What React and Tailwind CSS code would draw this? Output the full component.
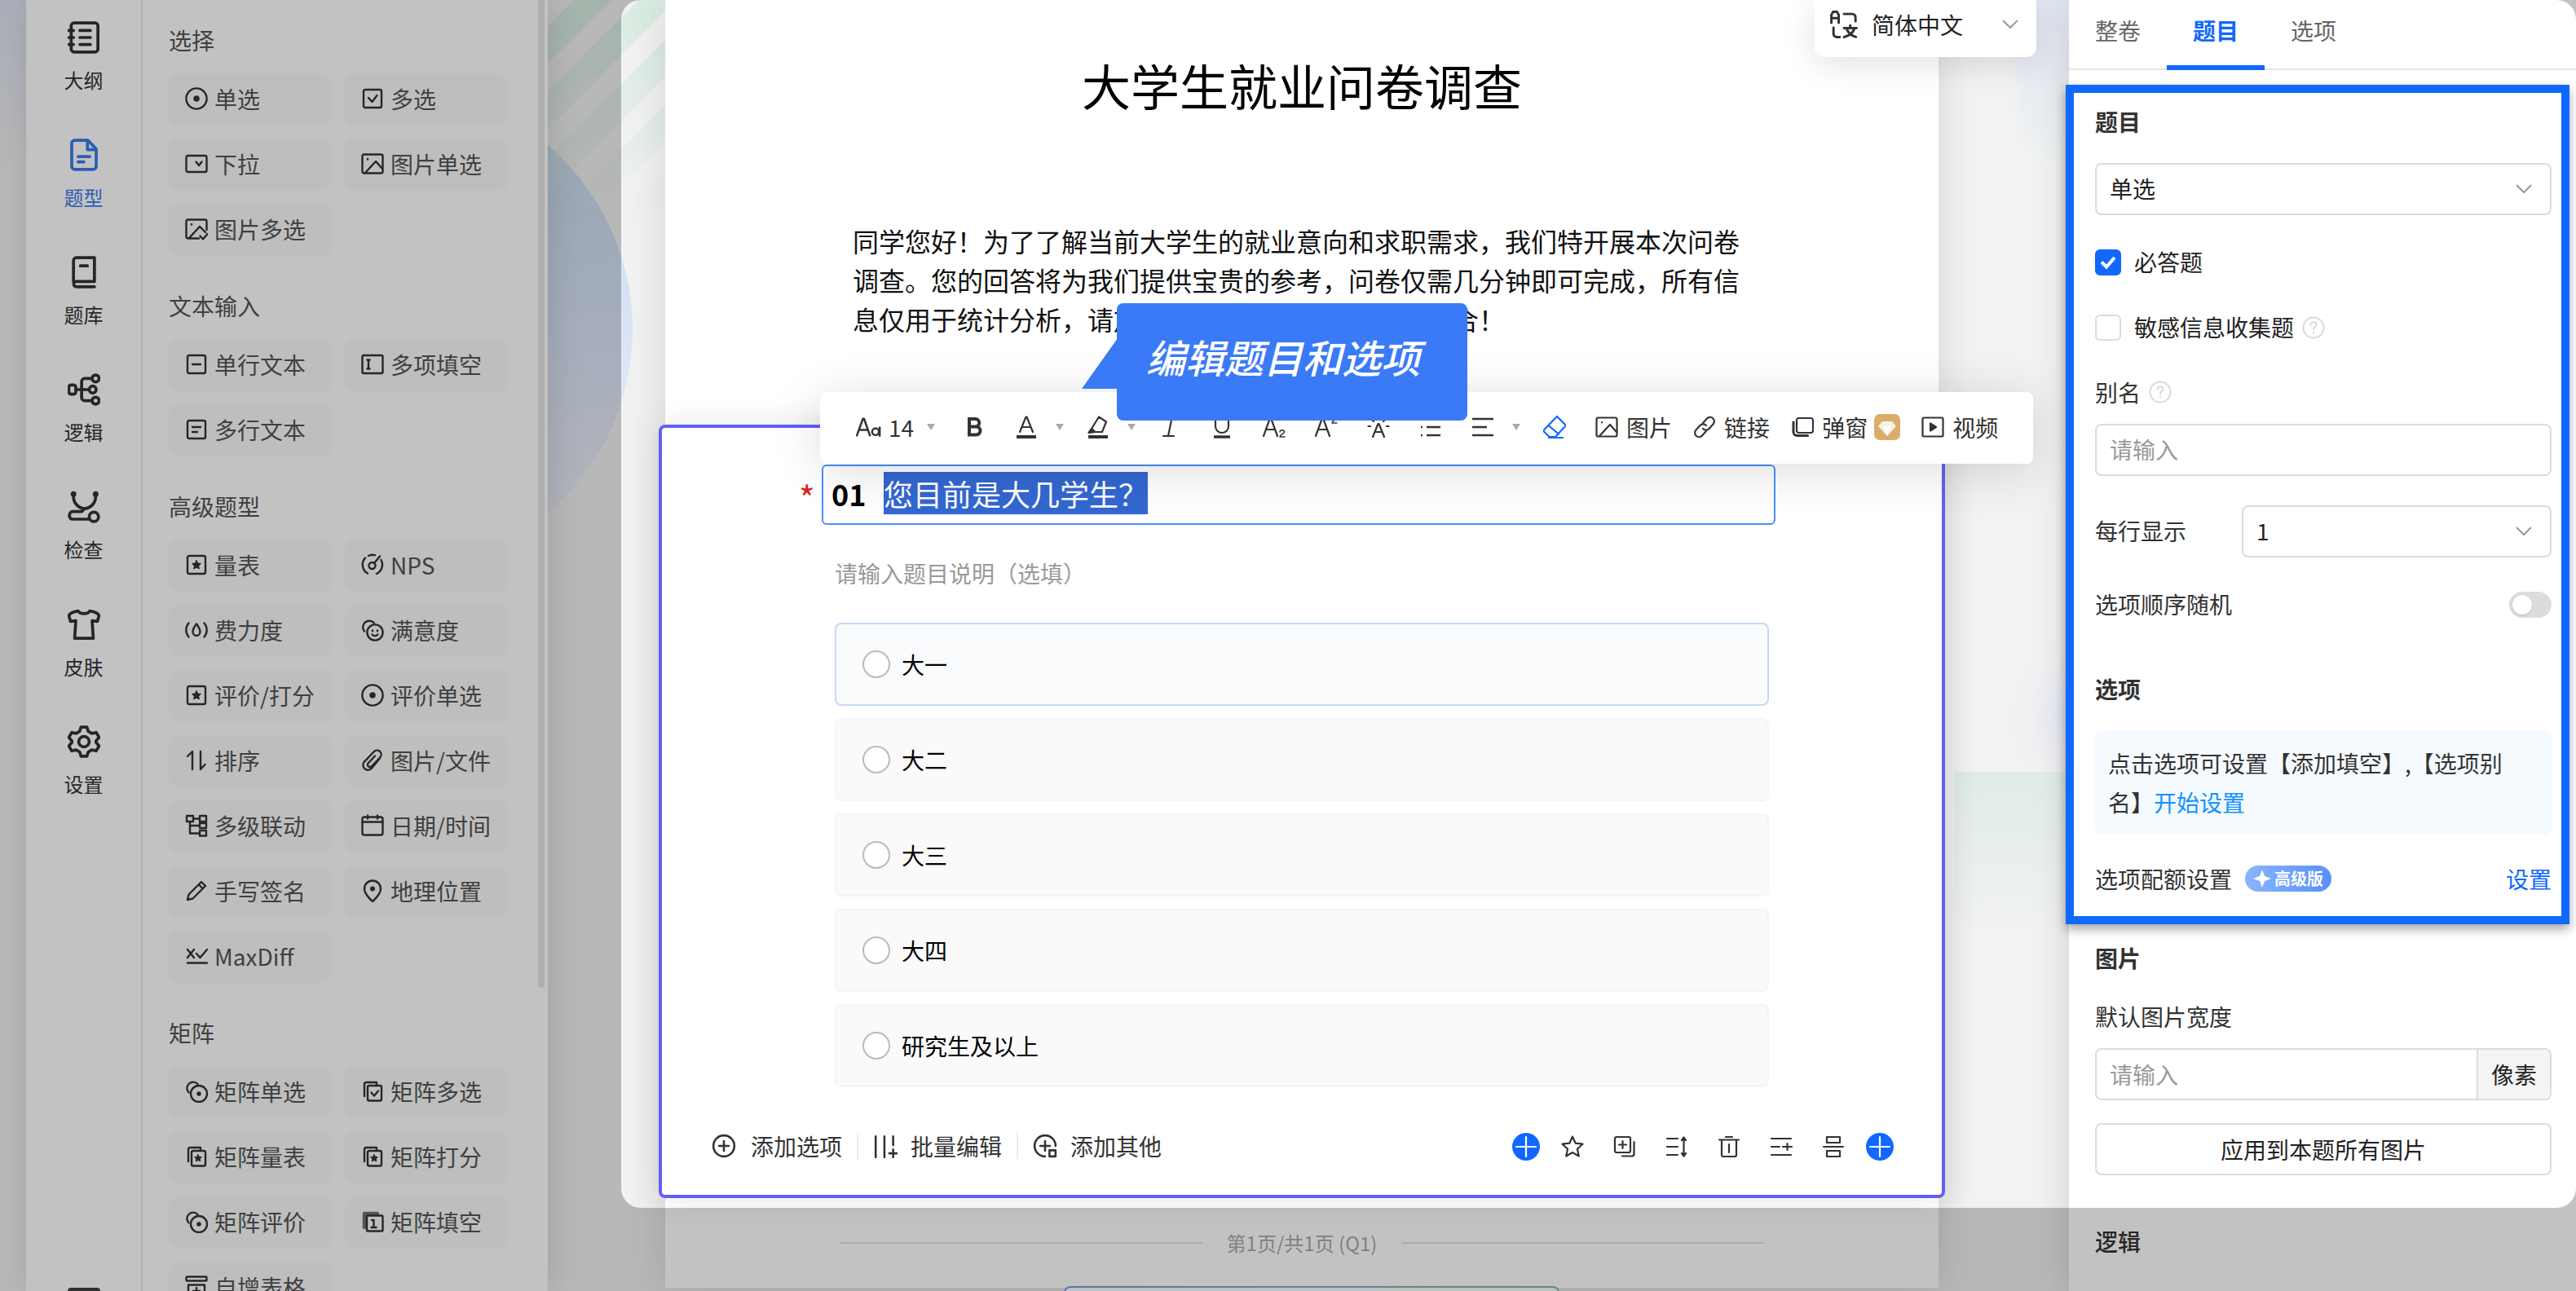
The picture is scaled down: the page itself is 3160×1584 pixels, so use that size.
// src/App.jsx
import React, { useEffect, useRef, useState } from 'react';

const Svg = ({ size = 28, children, className = '', sw = 2.4 }) => (
  <svg
    width={size}
    height={size}
    viewBox="0 0 28 28"
    fill="none"
    stroke="currentColor"
    strokeWidth={sw}
    strokeLinecap="round"
    strokeLinejoin="round"
    className={`shrink-0 ${className}`}
    aria-hidden="true"
  >
    {children}
  </svg>
);

const STAR = 'M14 8.5l1.7 3.5 3.8.5-2.8 2.7.7 3.8-3.4-1.8-3.4 1.8.7-3.8-2.8-2.7 3.8-.5z';
const SMALL_STAR = 'M16 11.5l1.4 2.8 3 .4-2.2 2.1.5 3.1-2.7-1.5-2.7 1.5.5-3.1-2.2-2.1 3-.4z';
const BACK_CARD = 'M4 20V5.5A2.5 2.5 0 0 1 6.500 3H19v3';

// question type glyphs, all on a 28px grid
const glyphs = {
  radio: <><circle cx="14" cy="14" r="12.6" /><circle cx="14" cy="14" r="2.600" fill="currentColor" /></>,
  check: <><rect x="3" y="3" width="22" height="22" rx="2" /><path d="M9 13l4.500 5 6-8" /></>,
  dropdown: <><rect x="1.5" y="4" width="25" height="20" rx="2" /><path d="M13.500 11.500l3.500 4.500 3.500-4.500" /></>,
  image: <><rect x="1.5" y="2.500" width="25" height="23" rx="2" /><path d="M8 8v.5M5 25L18 11l8 9" /></>,
  imageMulti: <><path d="M17 25.500H3.500a2 2 0 0 1-2-2v-19a2 2 0 0 1 2-2h21a2 2 0 0 1 2 2V15M8 8v.5M5 25L18 11l7 7M18.500 22.500l3.500 4 5.500-6.500" /></>,
  line: <><rect x="3" y="3" width="22" height="22" rx="2" /><path d="M9 14h10" /></>,
  fill: <><rect x="1.5" y="3" width="25" height="22" rx="1.500" /><path d="M7.500 8.500h3M9 8.500v11M7.500 19.500h3" /></>,
  lines: <><rect x="3" y="3" width="22" height="22" rx="2" /><path d="M9 11h10M9 17h6" /></>,
  star: <><rect x="3" y="3" width="22" height="22" rx="2" /><path d={STAR} fill="currentColor" strokeWidth="1" /></>,
  nps: <><path d="M8 24.500A12.300 12.300 0 0 1 5 5.500M9 3a12.300 12.300 0 0 1 8-.9M24.500 8a12.300 12.300 0 0 1-5.500 17" /><circle cx="13.500" cy="15" r="4" /><path d="M16 12l7-8.500" /></>,
  effort: <><path d="M4.500 5.500a13 13 0 0 0 0 17M23.500 5.500a13 13 0 0 1 0 17M14 6.500c-3 4-4.500 6.500-4.500 9.500a4.500 5 0 0 0 9 0c0-3-1.500-5.500-4.500-9.500z" /></>,
  smile: <><path d="M4 15.500A7.500 7.500 0 1 1 16 5.500" /><circle cx="17" cy="17" r="9.600" /><path d="M14 14.500v.8M20 14.500v.8M13.500 19.500a4.500 4.500 0 0 0 7 0" /></>,
  sort: <><path d="M3 9l6-6v22M19 3v22l5.500-6" /></>,
  clip: <><path d="M22.500 12L13 23.500a6 6 0 0 1-9.300-7.700L15.500 3.500a5 5 0 0 1 8 6.500L13 21a2.800 2.800 0 0 1-4.500-3.500L17 8.500" /></>,
  cascade: <><rect x="2" y="2" width="8" height="7" /><rect x="18" y="2" width="8" height="7" /><rect x="18" y="11" width="8" height="6" /><rect x="18" y="20" width="8" height="6.500" /><path d="M10 5.500h8M6 9v14.500h12M6 14h12" /></>,
  calendar: <><rect x="1.5" y="3.500" width="25" height="22" rx="2.500" /><path d="M2 9.500h24M8 1.500v4M20 1.500v4" /></>,
  pen: <><path d="M3 25l1.500-6.500L20 3l5 5L9.500 23.500zM17 6.500l4.500 4.500" /></>,
  pin: <><path d="M14 27s10-8.500 10-15.500a10 10 0 0 0-20 0C4 18.500 14 27 14 27z" /><circle cx="14" cy="11.500" r="3" fill="currentColor" stroke="none" /></>,
  maxdiff: <><path d="M3 6l8 10M11 6L3 16M14 11l4.500 5L27 6M3 22.500h24" /></>,
  rings: <><path d="M4.500 15.500A7.500 7.500 0 1 1 15.500 5" /><circle cx="17" cy="17" r="10" /><circle cx="17" cy="17" r="1.500" fill="currentColor" /></>,
  cardsCheck: <><path d={BACK_CARD} /><rect x="8" y="7" width="17" height="18.500" rx="2" /><path d="M12.500 15.500l3.500 4 5-6" /></>,
  cardsStar: <><path d={BACK_CARD} /><rect x="8" y="7" width="17" height="18.500" rx="2" /><path d={SMALL_STAR} fill="currentColor" strokeWidth="1" /></>,
  cardsFill: <><path d="M4 21V4h16" strokeWidth="4.500" className="opacity-70" /><rect x="7" y="6.500" width="19.500" height="19" rx="1" /><path d="M13 12h2.500v9M12.500 21h6" /></>,
  table: <><rect x="1.5" y="1.500" width="25" height="5" rx="1" /><path d="M4 27V11.500h20V27M10 19h8M14 15v8" /></>,
};

const sections = [
  {
    title: '选择',
    items: [['radio', '单选'], ['check', '多选'], ['dropdown', '下拉'], ['image', '图片单选'], ['imageMulti', '图片多选']],
  },
  {
    title: '文本输入',
    items: [['line', '单行文本'], ['fill', '多项填空'], ['lines', '多行文本']],
  },
  {
    title: '高级题型',
    items: [
      ['star', '量表'], ['nps', 'NPS'], ['effort', '费力度'], ['smile', '满意度'], ['star', '评价/打分'],
      ['radio', '评价单选'], ['sort', '排序'], ['clip', '图片/文件'], ['cascade', '多级联动'],
      ['calendar', '日期/时间'], ['pen', '手写签名'], ['pin', '地理位置'], ['maxdiff', 'MaxDiff'],
    ],
  },
  {
    title: '矩阵',
    items: [
      ['rings', '矩阵单选'], ['cardsCheck', '矩阵多选'], ['cardsStar', '矩阵量表'], ['cardsStar', '矩阵打分'],
      ['rings', '矩阵评价'], ['cardsFill', '矩阵填空'], ['table', '自增表格'],
    ],
  },
];

// side navigation, 40px icons
const navItems = [
  { label: '大纲', icon: <><rect x="3" y="1.500" width="23" height="25" rx="2.500" /><path d="M1 8h4M1 14h4M1 20h4M10.500 8h9M10.500 14h9M10.500 20h9" /></> },
  { label: '题型', active: true, icon: <><path d="M17.500 1.500H6A2.500 2.500 0 0 0 3.500 4v20A2.500 2.500 0 0 0 6 26.500h16a2.500 2.500 0 0 0 2.500-2.500V9zM17 2v7.500h7.500M9 15.500h10M9 20h5" /></> },
  { label: '题库', icon: <><path d="M5 22V4a2.500 2.500 0 0 1 2.500-2.500H23V22H7.500a2.200 2.200 0 0 0 0 4.500H23M11 8.500h6" /></> },
  { label: '逻辑', icon: <><rect x="1" y="10" width="6" height="8" rx="2" /><circle cx="24" cy="4.500" r="3" /><circle cx="21.500" cy="14" r="3" /><circle cx="24" cy="23.500" r="3" /><path d="M7 14h11.500M21 4.500h-6.500A2.500 2.500 0 0 0 12 7v14a2.500 2.500 0 0 0 2.500 2.500H21" /></> },
  { label: '检查', icon: <><path d="M5 2v3c0 6 4.500 10 9.500 10.500C19.500 15 24 11 24 5V2M14.500 15.500L12 18H4.500C2.500 18 1.500 19.500 1.500 21.500s1 3 3 3H19" /><circle cx="5" cy="3" r="1.200" fill="currentColor" /><circle cx="24" cy="3" r="1.200" fill="currentColor" /><circle cx="22.500" cy="22.500" r="4" /></> },
  { label: '皮肤', icon: <path d="M9 2.500c1.500 3 8.500 3 10 0 3.500.5 7 2 8 4l-1.500 5L21 11l1 15H6l1-15-4.500.5L1 6.500c1-2 4.500-3.500 8-4z" /> },
  { label: '设置', icon: <><path d="M11.500 1.500h5l1.200 3.700 3 1.700 3.800-.8 2.500 4.300-2.600 2.900v1.400l2.600 2.900-2.500 4.300-3.800-.8-3 1.700-1.200 3.700h-5l-1.200-3.700-3-1.700-3.800.8L1 17.600l2.600-2.900v-1.400L1 10.400l2.500-4.300 3.800.8 3-1.700z" /><circle cx="14" cy="14" r="4.500" /></> },
];

const options = ['大一', '大二', '大三', '大四', '研究生及以上'];

const SideNav = () => (
  <nav className="flex w-[143px] shrink-0 flex-col items-center gap-[60px] border-r-2 border-[#e8e8e8] bg-white pt-[26px]">
    {navItems.map((item) => (
      <button
        key={item.label}
        className={`flex h-[84px] shrink-0 flex-col items-center justify-between text-2xl/8 ${
          item.active ? 'text-[#3a7bee]' : 'text-[#333]'
        }`}
      >
        <Svg size={40} sw={2.6}>{item.icon}</Svg>
        <span className="-mb-1">{item.label}</span>
      </button>
    ))}
    <button className="mt-auto h-1 w-10 rounded-t bg-[#404040]" aria-label="更多" />
  </nav>
);

const TypePanel = () => (
  <aside className="relative w-[497px] shrink-0 overflow-hidden bg-white pl-8">
    {sections.map((section, index) => (
      <section key={section.title} className={index === 0 ? 'pt-7' : 'pt-10'}>
        <h2 className="mb-5 text-[28px]/[42px] text-[#555]">{section.title}</h2>
        <div className="grid w-[416px] grid-cols-2 gap-4">
          {section.items.map(([icon, label]) => (
            <button key={label} className="flex h-16 items-center gap-2 rounded-xl bg-[#fafafa] pb-0.5 pl-5 text-[28px]/[42px] text-[#555]">
              <Svg className="text-[#333]">{glyphs[icon]}</Svg>
              {label}
            </button>
          ))}
        </div>
      </section>
    ))}
    <div className="absolute top-0 right-1 h-[1212px] w-2 rounded-b bg-[#e6e6e6]" />
  </aside>
);

// decorative canvas behind the survey sheet
const Backdrop = () => (
  <div className="pointer-events-none absolute inset-0 overflow-hidden">
    <svg width="200" height="700" className="absolute top-0 left-0">
      <defs>
        <linearGradient id="stripeFade" gradientUnits="userSpaceOnUse" x1="0" y1="0" x2="0" y2="280">
          <stop offset="0" stopColor="#d9ece2" />
          <stop offset="1" stopColor="#d9ece2" stopOpacity="0" />
        </linearGradient>
        <linearGradient id="discFade" x1="0" y1="0" x2="0" y2="1">
          <stop offset="0.1" stopColor="#c8daf0" />
          <stop offset="0.500" stopColor="#dae4f7" />
          <stop offset="1" stopColor="#eef0f6" />
        </linearGradient>
      </defs>
      <circle cx="-193" cy="404" r="297" fill="url(#discFade)" />
      {[32, 112, 193, 273, 353].map((x) => (
        <polygon key={x} fill="url(#stripeFade)" points={`${x},0 ${x + 46},0 ${x - 354},400 ${x - 400},400`} />
      ))}
    </svg>
    <svg width="170" height="1300" className="absolute top-0 right-0">
      <defs>
        <linearGradient id="skyFade" x1="0" y1="0" x2="0" y2="1">
          <stop offset="0" stopColor="#dfe5f3" />
          <stop offset="1" stopColor="#eef1f2" />
        </linearGradient>
        <linearGradient id="mintFade" x1="0" y1="0" x2="0" y2="1">
          <stop offset="0" stopColor="#dfecea" />
          <stop offset="1" stopColor="#f2f2f2" />
        </linearGradient>
        <radialGradient id="glow">
          <stop offset="0" stopColor="#dfe3f6" />
          <stop offset="1" stopColor="#f2f2f2" stopOpacity="0" />
        </radialGradient>
        <filter id="soft"><feGaussianBlur stdDeviation="8" /></filter>
      </defs>
      <path d="M104 -20H190V190H122C108 160 104 90 104 -20z" fill="url(#skyFade)" filter="url(#soft)" />
      <circle cx="190" cy="880" r="110" fill="url(#glow)" />
      <rect x="30" y="947" width="140" height="200" fill="url(#mintFade)" />
    </svg>
  </div>
);

const Caret = () => (
  <svg width="10" height="8" viewBox="0 0 10 8" className="shrink-0 fill-[#aaa]" aria-hidden="true"><path d="M0 0h10L5 8z" /></svg>
);

const Tool = ({ label, children, className = '' }) => (
  <button aria-label={label} className={`flex h-8 w-8 shrink-0 items-center justify-center ${className}`}>
    <Svg sw={2.2}>{children}</Svg>
  </button>
);

const LabelTool = ({ icon, label, children }) => (
  <button className="flex shrink-0 items-center gap-2 text-[28px]/[42px]">
    <span className="flex h-8 w-8 items-center justify-center"><Svg sw={2.2}>{icon}</Svg></span>
    {label}
    {children}
  </button>
);

const FormatToolbar = () => (
  <div className="absolute -top-[44px] left-[194px] z-10 flex h-[88px] w-[1488px] items-center gap-8 rounded-lg bg-white pb-0.5 pl-11 whitespace-nowrap text-[#333] shadow-[0_8px_60px_rgba(0,0,0,0.14)]">
    <button className="flex shrink-0 items-center gap-2 text-[28px]/[42px]">
      <Svg size={32} sw={2.2}><path d="M1 23L7.500 5h1.200L15 23M3.500 17h9" /><circle cx="21" cy="19" r="3.600" /><path d="M25.500 14.500v9" /></Svg>
      14
      <span className="ml-2"><Caret /></span>
    </button>
    <Tool label="加粗"><path d="M8 4h7.500a4.700 4.700 0 0 1 0 9.500H8zM8 13.500h8.500a5 5 0 0 1 0 10H8z" strokeWidth="4" strokeLinejoin="miter" /></Tool>
    <div className="flex items-center gap-5">
      <Tool label="文字颜色"><path d="M6 20L13.500 1.500h1L22 20M8.500 14h11" /><path d="M2 26h24" strokeWidth="4" strokeLinecap="butt" /></Tool>
      <Caret />
    </div>
    <div className="-ml-1.5 flex items-center gap-5">
      <Tool label="背景颜色"><path d="M15 1.500l9 6-5 12.500h-8.500L6 16zM10.500 20L6 16l-3.500 5z" /><path d="M6.500 16.500L3.500 20.500 9.500 20z" fill="currentColor" /><path d="M2 26h24" strokeWidth="4" strokeLinecap="butt" /></Tool>
      <Caret />
    </div>
    <Tool label="斜体" className="-ml-1.5"><path d="M11 3h11M6 25h13M16.500 3L12 25" /></Tool>
    <Tool label="下划线"><path d="M6 2v11a8 8 0 0 0 16 0V2" /><path d="M4 26h20" strokeWidth="3.500" strokeLinecap="butt" /></Tool>
    <Tool label="下标"><path d="M1 25L9 3h1l8 22M4 17h11" /><path d="M21 20c0-3 5.500-3 5.500 0 0 2-5.500 3-5.500 6H27" strokeWidth="1.500" /></Tool>
    <Tool label="上标"><path d="M1 25L9 3h1l8 22M4 17h11" /><path d="M21 3c0-3 5.500-3 5.500 0 0 2-5.500 3-5.500 6H27" strokeWidth="1.500" /></Tool>
    <Tool label="特效"><path d="M7 26l6.500-16h1L21 26M9.500 20h9M14 1v4M5 4l3 3M23 4l-3 3M1.500 13H4M24 13h2.500" /></Tool>
    <Tool label="列表"><path d="M2 4h2M9 4h17M2 14h2M9 14h17M2 24h2M9 24h17" strokeLinecap="butt" strokeWidth="2.600" /></Tool>
    <div className="flex items-center gap-5">
      <Tool label="对齐"><path d="M1 4h26M1 14h18M1 24h26" strokeLinecap="butt" strokeWidth="2.600" /></Tool>
      <Caret />
    </div>
    <Tool label="清除格式" className="-ml-1.5 text-[#1168ff]"><path d="M17 1L28 12 15 26H7.500L0 18.500zM6.500 12L19 22.500M7 27h17" /></Tool>
    <div className="flex items-center gap-6">
      <LabelTool label="图片" icon={<><rect x="1.5" y="2.500" width="25" height="23" rx="2" /><path d="M8 8v.5M5 25L18 11l8 9" /></>} />
      <LabelTool label="链接" icon={<><path d="M12 9l5-5.500a5 5 0 0 1 7.500 7L19.500 16a5 5 0 0 1-7.500 0M16 19l-5 5.500a5 5 0 0 1-7.500-7L8.500 12a5 5 0 0 1 7.500 0" /></>} />
      <LabelTool label="弹窗" icon={<><rect x="7" y="3" width="20" height="18" rx="2.500" /><path d="M3 8v12a4.500 4.500 0 0 0 4.500 4.500h13" strokeWidth="3" /></>}>
        <svg width="32" height="32" viewBox="0 0 32 32" aria-hidden="true">
          <rect width="32" height="32" rx="7" fill="#d9ae6b" />
          <path d="M10 9h12l5 6-11 12L5 15z" fill="#f8f1e3" />
          <path d="M11 15h10l-5 11z" fill="#fff" />
        </svg>
      </LabelTool>
      <LabelTool label="视频" icon={<><rect x="1.5" y="2.500" width="25" height="23" rx="1.500" /><path d="M11 9.500v9l7-4.500z" fill="currentColor" /></>} />
    </div>
  </div>
);

const Callout = () => (
  <div className="absolute top-[372px] left-[554px] z-20 flex h-36 w-[430px] items-center rounded-lg bg-[#3a7af6] pb-3.5 pl-9 text-5xl font-medium text-white italic">
    <svg width="44" height="62" viewBox="0 0 44 62" className="absolute top-[43px] -left-[43px] fill-[#3a7af6]" aria-hidden="true"><path d="M44 0v62H0z" /></svg>
    编辑题目和选项
  </div>
);

const Divider = () => <span className="h-8 w-0.5 bg-[#ececec]" />;

const PlusDot = ({ label }) => (
  <button aria-label={label} className="flex h-[34px] w-[34px] items-center justify-center rounded-full bg-[#1168ff] text-white">
    <Svg sw={2.2}><path d="M14 2v24M2 14h24" /></Svg>
  </button>
);

const QuestionCard = () => {
  const [answer, setAnswer] = useState('');
  const [title, setTitle] = useState('您目前是大几学生？');
  const titleRef = useRef(null);

  // open with the whole title selected
  useEffect(() => {
    titleRef.current.focus();
    titleRef.current.select();
  }, []);

  return (
    <div className="relative -mx-2 mt-[106px] rounded-lg border-4 border-[#635ff5] bg-white pt-[45px] pb-[42px] shadow-[0_0_40px_rgba(0,0,0,0.1)]">
      <FormatToolbar />
      <div className="relative mr-[204px] ml-[196px]">
        <span className="absolute top-3 -left-7 text-[42px]/[56px] text-[#e02020]">*</span>
        <div className="flex h-[74px] items-center rounded-md border-2 border-[#4a8ffb] pb-1 pl-2.5">
          <label htmlFor="title" className="w-16 text-4xl font-bold text-black">01</label>
          <input
            id="title"
            ref={titleRef}
            value={title}
            onChange={(e) => setTitle(e.target.value)}
            className="h-14 flex-1 bg-transparent text-4xl text-black outline-none selection:bg-[#3367d1] selection:text-white"
          />
        </div>
      </div>
      <div className="mr-[212px] ml-[212px]">
        <p className="mt-[38px] text-[28px]/[42px] text-[#999]">请输入题目说明（选填）</p>
        <div className="mt-10 flex flex-col gap-[15px]">
          {options.map((option, index) => (
            <label
              key={option}
              className={`flex h-[102px] items-center gap-3.5 rounded-lg border-2 pl-8 text-[28px] text-black ${
                index === 0 ? 'border-[#c7d8f7] bg-[#fafbfd]' : 'border-[#f5f5f5] bg-[#fafafa]'
              }`}
            >
              <input
                type="radio"
                name="grade"
                checked={answer === option}
                onChange={() => setAnswer(option)}
                className="h-[34px] w-[34px] appearance-none rounded-full border-2 border-[#bbb] bg-white checked:border-[10px] checked:border-[#1168ff]"
              />
              {option}
            </label>
          ))}
        </div>
      </div>
      <div className="mt-14 mr-[59px] ml-[61px] flex h-[34px] items-center justify-between text-[#333]">
        <div className="flex items-center gap-[18px] pb-0.5 text-[28px]/[42px]">
          <button className="flex items-center gap-4">
            <span className="w-8"><Svg size={30}><circle cx="14" cy="14" r="12" /><path d="M14 8.500v11M8.500 14h11" /></Svg></span>
            添加选项
          </button>
          <Divider />
          <button className="flex items-center gap-3.5">
            <span className="w-8"><Svg size={30}><path d="M3 3v24M13 3v24M23 3v10M23 18v9M18.500 22.500h9" /></Svg></span>
            批量编辑
          </button>
          <Divider />
          <button className="flex items-center gap-3.5">
            <span className="w-8"><Svg size={30}><path d="M14 26A12 12 0 1 1 26 14M14 8.500v11M8.500 14h11" /><rect x="19" y="19" width="7" height="7" /></Svg></span>
            添加其他
          </button>
        </div>
        <div className="flex items-center gap-6">
          <PlusDot label="在前面添加" />
          <div className="flex items-center gap-8">
            <Tool label="收藏"><path d="M14 1.500l3.700 8.200 8.800 1-6.600 6 1.900 8.800L14 21l-7.800 4.500 1.900-8.800-6.600-6 8.800-1z" /></Tool>
            <Tool label="复制"><rect x="2" y="2" width="19" height="19" rx="2" /><path d="M11.500 7v9M7 11.500h9M25.500 8v15a2.500 2.500 0 0 1-2.500 2.500H11" /></Tool>
            <Tool label="移动"><path d="M2 4h13M2 14h13M2 24h13M22.500 3v22M20 6l2.500-3.500L25 6M20 22l2.500 3.500L25 22" /></Tool>
            <Tool label="删除"><path d="M2 5.500h24M10 2h8M5 5.500V24a2 2 0 0 0 2 2h14a2 2 0 0 0 2-2V5.500M14 11v10" /></Tool>
            <Tool label="插入"><path d="M2 4h24M2 14h10M2 24h24M16 14h11M21.500 10v8" /></Tool>
            <Tool label="分页"><path d="M2 14h24" /><rect x="6" y="2" width="16" height="7" /><rect x="6" y="19" width="16" height="7" /></Tool>
          </div>
          <PlusDot label="在后面添加" />
        </div>
      </div>
    </div>
  );
};

const ChevronDown = ({ className = '' }) => (
  <svg width="20" height="12" viewBox="0 0 20 12" fill="none" stroke="#999" strokeWidth="2" className={`pointer-events-none ${className}`} aria-hidden="true">
    <path d="M1 1l9 9 9-9" />
  </svg>
);

const LanguageSelect = () => (
  <div className="absolute top-0 right-10 z-10 flex h-[70px] w-[272px] items-center rounded-b-xl bg-white pb-2.5 pl-[18px] shadow-[0_8px_40px_rgba(0,0,0,0.12)]">
    <Svg size={36} className="text-[#333]" sw={2.3}>
      <path d="M2 12.500V5l1.500-3h4L9 5v7.500M2 8h7M14 4h8a3 3 0 0 1 3 3v4M4 17v6a3 3 0 0 0 3 3h3M14 17.500h12M20 15v2.500M16.500 18c1.500 4 5 7 9 8M24 18c-1.500 4-5 7-10 8" />
    </Svg>
    <label htmlFor="lang" className="sr-only">语言</label>
    <select id="lang" className="ml-4 flex-1 appearance-none bg-transparent text-[28px] text-[#222] outline-none">
      <option>简体中文</option>
    </select>
    <ChevronDown className="absolute right-[22px]" />
  </div>
);

const Canvas = () => (
  <main className="relative min-w-0 flex-1 bg-[#f2f2f2] pr-40 pl-36">
    <Backdrop />
    <LanguageSelect />
    <div className="relative flex flex-col bg-white pb-[37px] shadow-[0_0_50px_rgba(0,0,0,0.12)]">
      <h1 className="pt-[62px] text-center text-6xl/[84px] text-black">大学生就业问卷调查</h1>
      <p className="mx-[230px] mt-[125px] text-[32px]/[48px] text-[#111]">
        同学您好！为了了解当前大学生的就业意向和求职需求，我们特开展本次问卷调查。您的回答将为我们提供宝贵的参考，问卷仅需几分钟即可完成，所有信息仅用于统计分析，请放心填写。感谢您的支持与配合！
      </p>
      <Callout />
      <QuestionCard />
      <div className="mx-[214px] mt-[37px] flex items-center gap-[30px] text-2xl/9 text-[#aaa]">
        <span className="h-0.5 flex-1 bg-[#e0e6ee]" />
        第1页/共1页 (Q1)
        <span className="h-0.5 flex-1 bg-[#e0e3ee]" />
      </div>
    </div>
    <div className="relative -mt-0.5 flex justify-center pl-6">
      <div className="h-16 w-[608px] rounded-lg bg-linear-to-r from-[#6f9fe8] to-[#6fc29f] p-0.5">
        <div className="h-full rounded-md bg-white" />
      </div>
    </div>
  </main>
);

const HelpIcon = () => (
  <Svg className="text-[#d9d9d9]" sw={2}>
    <circle cx="14" cy="14" r="12.500" />
    <path d="M10.500 11c0-5 7-4.500 7-.5 0 2.500-3.500 2.500-3.500 5.500M14 20v.5" />
  </Svg>
);

const SettingSelect = ({ id, value }) => (
  <div className="relative flex flex-1 items-center">
    <select id={id} className="h-16 w-full appearance-none rounded-lg border-2 border-[#dcdcdc] bg-white pb-0.5 pl-4 text-[28px] text-[#222] outline-none">
      <option>{value}</option>
    </select>
    <ChevronDown className="absolute right-6" />
  </div>
);

const CheckRow = ({ id, label, defaultChecked, children }) => (
  <div className="flex h-8 items-center">
    <span className="relative flex h-8 w-8">
      <input
        id={id}
        type="checkbox"
        defaultChecked={defaultChecked}
        className="peer h-8 w-8 appearance-none rounded-md border-2 border-[#dcdcdc] bg-white checked:border-[#1168ff] checked:bg-[#1168ff]"
      />
      <svg viewBox="0 0 32 32" className="pointer-events-none absolute inset-0 hidden fill-none stroke-white stroke-[4px] peer-checked:block" aria-hidden="true">
        <path d="M8 15.500l6 6L24 10" />
      </svg>
    </span>
    <label htmlFor={id} className="mr-2.5 ml-4 pb-0.5 text-[28px]/[42px] text-[#222]">{label}</label>
    {children}
  </div>
);

const SettingsPanel = () => (
  <aside className="relative w-[622px] shrink-0 bg-white text-[28px]/[42px] text-[#333] shadow-[-4px_0_40px_rgba(0,0,0,0.12)]">
    <div role="tablist" className="flex h-[86px] border-b-2 border-[#e6e6e6] text-[#666]">
      <button role="tab" className="w-[120px] pb-2.5">整卷</button>
      <button role="tab" aria-selected="true" className="-mb-0.5 w-[120px] border-b-6 border-[#1168ff] pb-1.5 font-bold text-[#1168ff]">题目</button>
      <button role="tab" className="w-[120px] pb-2.5">选项</button>
    </div>
    <div className="flex flex-col pt-[42px] pr-[30px] pl-8">
      <label htmlFor="type" className="mb-[30px] font-bold">题目</label>
      <SettingSelect id="type" value="单选" />
      <div className="mt-[42px] flex flex-col gap-12">
        <CheckRow id="required" label="必答题" defaultChecked />
        <CheckRow id="sensitive" label="敏感信息收集题"><HelpIcon /></CheckRow>
      </div>
      <div className="mt-[42px] flex items-center gap-2.5">
        <label htmlFor="alias">别名</label>
        <HelpIcon />
      </div>
      <input id="alias" placeholder="请输入" className="mt-[18px] h-16 rounded-lg border-2 border-[#dcdcdc] pb-0.5 pl-4 outline-none placeholder:text-[#999]" />
      <div className="mt-9 flex items-center">
        <label htmlFor="perRow" className="w-[180px] pb-0.5">每行显示</label>
        <SettingSelect id="perRow" value="1" />
      </div>
      <div className="mt-[42px] flex h-8 items-center justify-between">
        <label htmlFor="shuffle" className="pb-0.5">选项顺序随机</label>
        <input
          id="shuffle"
          type="checkbox"
          role="switch"
          className="h-8 w-[52px] appearance-none rounded-full bg-[#dcdcdc] p-1 before:block before:h-6 before:w-6 before:rounded-full before:bg-white before:shadow checked:bg-[#1168ff] checked:before:ml-5"
        />
      </div>
      <h2 className="mt-[66px] font-bold">选项</h2>
      <p className="mt-[30px] rounded-lg bg-[#f5faff] p-4 leading-[48px]">
        点击选项可设置【添加填空】,【选项别<br />名】<a href="#settings" className="text-[#1191ff]">开始设置</a>
      </p>
      <div className="mt-[38px] flex h-8 items-center">
        选项配额设置
        <span className="ml-4 flex h-8 items-center gap-1 rounded-full bg-linear-to-r from-[#8cb4ff] to-[#5590fa] px-2.5 text-xl font-bold text-white">
          <svg width="22" height="22" viewBox="0 0 22 22" fill="currentColor" aria-hidden="true"><path d="M11 0l3 8 8 3-8 3-3 8-3-8-8-3 8-3z" /></svg>
          高级版
        </span>
        <a href="#quota" className="ml-auto text-[#1168ff]">设置</a>
      </div>
      <h2 className="mt-[60px] font-bold">图片</h2>
      <label htmlFor="imgWidth" className="mt-[30px]">默认图片宽度</label>
      <div className="mt-[18px] flex h-16 overflow-hidden rounded-lg border-2 border-[#dcdcdc]">
        <input id="imgWidth" placeholder="请输入" className="min-w-0 flex-1 pl-4 outline-none placeholder:text-[#999]" />
        <span className="flex items-center border-l-2 border-[#dcdcdc] bg-[#f4f4f4] px-4 text-[#222]">像素</span>
      </div>
      <button className="mt-7 h-16 rounded-lg border-2 border-[#dcdcdc] text-[#222]">应用到本题所有图片</button>
      <h2 className="mt-[60px] font-medium">逻辑</h2>
    </div>
    <div className="pointer-events-none absolute top-[104px] right-2 -left-1 h-[1030px] border-10 border-[#1168ff] shadow-[0_6px_12px_rgba(0,0,0,0.35)]" />
  </aside>
);

export default function App() {
  return (
    <div className="relative flex h-screen overflow-hidden bg-[#f2f2f2] bg-linear-to-b from-[#e0e5f3] to-[#f2f2f2] to-[210px] pl-8 font-['Noto_Sans_CJK_SC',sans-serif]">
      <div className="relative z-10 flex shadow-[4px_0_40px_rgba(0,0,0,0.12)]">
        <SideNav />
        <TypePanel />
      </div>
      <Canvas />
      <SettingsPanel />
      {/* tour mask: dims everything outside the editing area */}
      <div className="pointer-events-none absolute top-0 right-0 bottom-[102px] left-[762px] z-30 rounded-3xl shadow-[0_0_0_4000px_rgba(0,0,0,0.24)]" />
    </div>
  );
}
